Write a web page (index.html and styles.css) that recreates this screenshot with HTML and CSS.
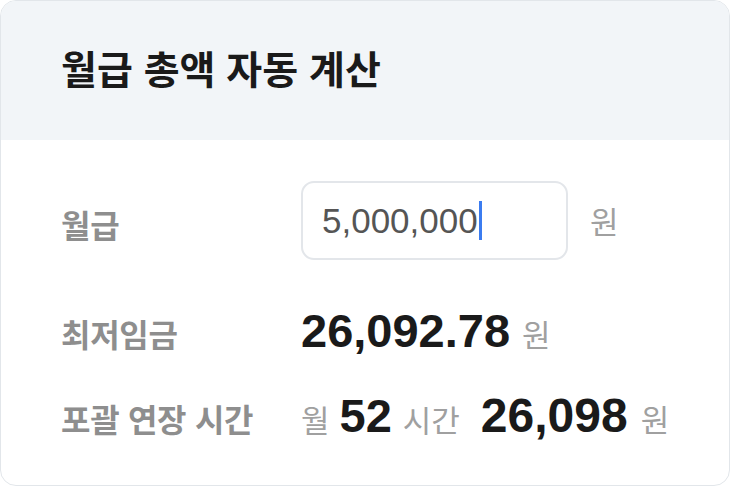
FILE: index.html
```html
<!DOCTYPE html>
<html lang="ko">
<head>
<meta charset="utf-8">
<link rel="stylesheet" href="styles.css">
</head>
<body>
<div class="card">
  <div class="card-head">
    <h1 class="title">월급 총액 자동 계산</h1>
  </div>
  <div class="card-body">
    <div class="row row-input">
      <div class="label">월급</div>
      <div class="value">
        <div class="input"><span class="input-text">5,000,000</span><span class="caret"></span></div>
        <span class="unit unit-input">원</span>
      </div>
    </div>
    <div class="row row-min">
      <div class="label">최저임금</div>
      <div class="value">
        <span class="num">26,092.78</span>
        <span class="unit">원</span>
      </div>
    </div>
    <div class="row row-ot">
      <div class="label">포괄 연장 시간</div>
      <div class="value">
        <span class="unit">월</span>
        <span class="num">52</span>
        <span class="unit">시간</span>
        <span class="num num-gap">26,098</span>
        <span class="unit">원</span>
      </div>
    </div>
  </div>
</div>
</body>
</html>
```

FILE: styles.css
```css
* { box-sizing: border-box; }
html, body { margin: 0; padding: 0; background: #ffffff; }
body {
  width: 730px;
  height: 486px;
  font-family: "Noto Sans CJK KR", "Noto Sans", sans-serif;
}
.card {
  width: 730px;
  height: 486px;
  border: 1px solid #e2e6ea;
  border-radius: 16px;
  overflow: hidden;
  display: flex;
  flex-direction: column;
}
.card-head {
  height: 139px;
  background: #f2f5f8;
  display: flex;
  align-items: center;
  padding-left: 60px;
  padding-bottom: 7px;
}
.title {
  margin: 0;
  font-size: 39px;
  font-weight: 700;
  color: #1a1a1a;
  letter-spacing: 0;
}
.card-body {
  padding: 41px 0 0 60px;
  display: flex;
  flex-direction: column;
}
.row {
  display: flex;
  align-items: baseline;
}
.row-input { align-items: center; }
.label {
  width: 240px;
  font-size: 32px;
  font-weight: 700;
  color: #8e8e8e;
  letter-spacing: -0.3px;
}
.row-input .label { padding-top: 7px; }
.value {
  display: flex;
  align-items: baseline;
}
.row-input .value { align-items: center; }
.input {
  width: 267px;
  height: 79px;
  border: 2px solid #e3e6ea;
  border-radius: 13px;
  padding-left: 19px;
  display: flex;
  align-items: center;
  font-family: "Liberation Sans", Arial, sans-serif;
  font-size: 35px;
  color: #555555;
}
.caret {
  display: inline-block;
  width: 3px;
  height: 39px;
  background: #3b7cf0;
  margin-left: 1px;
}
.unit {
  font-size: 31px;
  color: #a0a0a0;
  font-weight: 400;
}
.unit-input { margin-left: 22px; }
.num {
  font-family: "Liberation Sans", Arial, sans-serif;
  font-size: 47px;
  font-weight: 700;
  color: #1a1a1a;
  margin-right: 12px;
}
.row-min { margin-top: 43px; }
.row-ot { margin-top: 30px; }
.row-ot .unit { margin-right: 10px; }
.row-ot .num { margin-right: 11px; }
.row-ot .num-gap { margin-left: 11px; margin-right: 13px; font-size: 48px; }
```
